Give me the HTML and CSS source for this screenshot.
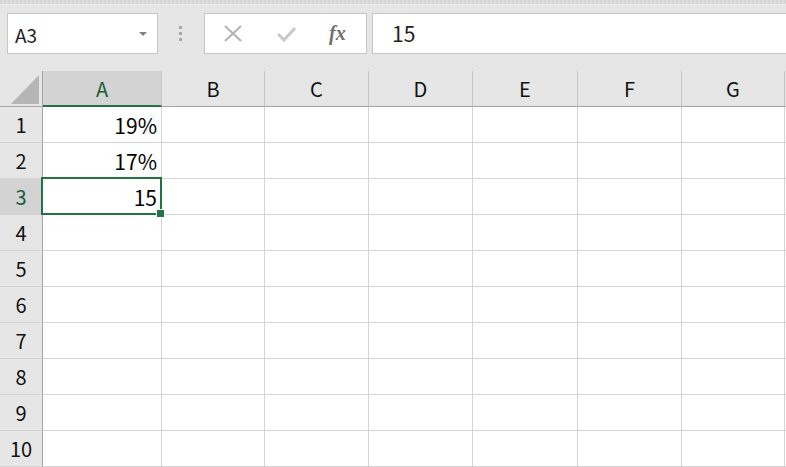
FILE: index.html
```html
<!DOCTYPE html>
<html lang="ja">
    <head>
        <meta charset="UTF-8">
        <title>Book1 - Excel</title>
        <link rel="stylesheet" href="styles.css">
    </head>
    <body>

        <div class="top_strip"></div>

        <!-- 名前ボックスと数式バー -->
        <div class="toolbar">
            <div class="name_box">
                <span class="name_text">A3</span>
                <span class="name_caret"></span>
            </div>
            <div class="grip"><i></i><i></i><i></i></div>
            <div class="fx_buttons">
                <svg class="btn_icon" width="18" height="17" viewBox="0 0 18 17">
                    <path d="M1 1 L17 16 M17 1 L1 16" stroke="#b3b3b3" stroke-width="2" fill="none"/>
                </svg>
                <svg class="btn_icon" width="19" height="16" viewBox="0 0 19 16">
                    <path d="M1 8 L7 14 L18 2" stroke="#c9c9c9" stroke-width="3" fill="none"/>
                </svg>
                <span class="fx_text">fx</span>
            </div>
            <div class="formula">15</div>
        </div>

        <!-- シート -->
        <div class="sheet">
            <div class="corner"><span class="corner_tri"></span></div>
            <div class="col_head col_sel">A</div>
            <div class="col_head">B</div>
            <div class="col_head">C</div>
            <div class="col_head">D</div>
            <div class="col_head">E</div>
            <div class="col_head">F</div>
            <div class="col_head">G</div>
            <div class="col_head col_tail"></div>

            <div class="row_head">1</div>
            <div class="cell num">19%</div><div class="cell"></div><div class="cell"></div><div class="cell"></div><div class="cell"></div><div class="cell"></div><div class="cell"></div><div class="cell"></div>

            <div class="row_head">2</div>
            <div class="cell num">17%</div><div class="cell"></div><div class="cell"></div><div class="cell"></div><div class="cell"></div><div class="cell"></div><div class="cell"></div><div class="cell"></div>

            <div class="row_head row_sel">3</div>
            <div class="cell num active">15</div><div class="cell"></div><div class="cell"></div><div class="cell"></div><div class="cell"></div><div class="cell"></div><div class="cell"></div><div class="cell"></div>

            <div class="row_head">4</div>
            <div class="cell"></div><div class="cell"></div><div class="cell"></div><div class="cell"></div><div class="cell"></div><div class="cell"></div><div class="cell"></div><div class="cell"></div>

            <div class="row_head">5</div>
            <div class="cell"></div><div class="cell"></div><div class="cell"></div><div class="cell"></div><div class="cell"></div><div class="cell"></div><div class="cell"></div><div class="cell"></div>

            <div class="row_head">6</div>
            <div class="cell"></div><div class="cell"></div><div class="cell"></div><div class="cell"></div><div class="cell"></div><div class="cell"></div><div class="cell"></div><div class="cell"></div>

            <div class="row_head">7</div>
            <div class="cell"></div><div class="cell"></div><div class="cell"></div><div class="cell"></div><div class="cell"></div><div class="cell"></div><div class="cell"></div><div class="cell"></div>

            <div class="row_head">8</div>
            <div class="cell"></div><div class="cell"></div><div class="cell"></div><div class="cell"></div><div class="cell"></div><div class="cell"></div><div class="cell"></div><div class="cell"></div>

            <div class="row_head">9</div>
            <div class="cell"></div><div class="cell"></div><div class="cell"></div><div class="cell"></div><div class="cell"></div><div class="cell"></div><div class="cell"></div><div class="cell"></div>

            <div class="row_head">10</div>
            <div class="cell"></div><div class="cell"></div><div class="cell"></div><div class="cell"></div><div class="cell"></div><div class="cell"></div><div class="cell"></div><div class="cell"></div>
        </div>

    </body>
</html>
```

FILE: styles.css
```css
* {
    margin: 0px;
    padding: 0px;
    box-sizing: border-box;
}

body {
    background-color: #e6e6e6;
    font-family: "Noto Sans CJK JP", "Noto Sans", sans-serif;
    color: #000000;
    overflow: hidden;
}

.top_strip {
    height: 5px;
    background: repeating-linear-gradient(90deg, #d6d6d6 0px, #d6d6d6 2px, #dedede 2px, #dedede 4px);
    border-bottom: 1px solid #ececec;
}

.toolbar {
    display: flex;
    align-items: flex-start;
    height: 66px;
    padding: 8px 0 0 7px;
}

.name_box {
    width: 151px;
    height: 41px;
    background-color: white;
    border: 1px solid #c6c6c6;
    display: flex;
    align-items: center;
    justify-content: space-between;
    padding: 0 10px 0 7px;
}

.name_text {
    font-size: 19px;
    color: #222222;
    padding-top: 2px;
}

.name_caret {
    width: 0;
    height: 0;
    border-left: 4px solid transparent;
    border-right: 4px solid transparent;
    border-top: 4px solid #808080;
}

.grip {
    width: 46px;
    height: 41px;
    display: flex;
    flex-direction: column;
    align-items: center;
    justify-content: center;
    gap: 3px;
    padding-right: 1px;
}

.grip i {
    width: 3px;
    height: 3px;
    background-color: #a9a9a9;
}

.fx_buttons {
    width: 163px;
    height: 41px;
    background-color: white;
    border: 1px solid #c6c6c6;
    display: flex;
    align-items: center;
    padding-left: 19px;
    gap: 35px;
}

.btn_icon {
    display: block;
}

.fx_text {
    font-family: "Liberation Serif", "DejaVu Serif", serif;
    font-style: italic;
    font-weight: bold;
    font-size: 20px;
    color: #707070;
    margin-left: -2px;
}

.formula {
    flex: 1;
    height: 41px;
    margin-left: 5px;
    background-color: white;
    border: 1px solid #c6c6c6;
    border-right: none;
    font-size: 21px;
    line-height: 39px;
    padding-left: 19px;
    color: #222222;
}

.sheet {
    display: grid;
    grid-template-columns: 43px 119px 103px 104px 104px 105px 104px 103px 20px;
    grid-template-rows: 36px repeat(10, 36px);
}

.corner {
    background-color: #e6e6e6;
    border-right: 1px solid #a5a5a5;
    border-bottom: 1px solid #a5a5a5;
    position: relative;
}

.corner_tri {
    position: absolute;
    right: 3px;
    bottom: 2px;
    width: 0;
    height: 0;
    border-left: 28px solid transparent;
    border-bottom: 29px solid #b5b5b5;
}

.col_head {
    background-color: #e6e6e6;
    border-right: 1px solid #c4c4c4;
    border-bottom: 1px solid #a5a5a5;
    font-size: 20px;
    text-align: center;
    line-height: 36px;
    color: #111111;
}

.col_tail {
    border-right: none;
}

.col_sel {
    background-color: #d3d3d3;
    border-bottom: 2px solid #217346;
    color: #1a5c38;
}

.row_head {
    background-color: #e6e6e6;
    border-right: 1px solid #a5a5a5;
    border-bottom: 1px solid #d4d4d4;
    font-size: 20px;
    text-align: center;
    line-height: 36px;
    color: #111111;
}

.row_sel {
    background-color: #d3d3d3;
    color: #1a5c38;
}

.cell {
    background-color: white;
    border-right: 1px solid #d4d4d4;
    border-bottom: 1px solid #d4d4d4;
    font-size: 21px;
    line-height: 36px;
}

.num {
    text-align: right;
    padding-right: 4px;
}

.active {
    position: relative;
}

/* 選択セルの枠とフィルハンドル */
.active::before {
    content: "";
    position: absolute;
    top: -2px;
    left: -2px;
    right: -1px;
    bottom: -1px;
    border: 2px solid #217346;
}

.active::after {
    content: "";
    position: absolute;
    right: -4px;
    bottom: -4px;
    width: 7px;
    height: 7px;
    background-color: #217346;
    border: 1px solid white;
}
```
